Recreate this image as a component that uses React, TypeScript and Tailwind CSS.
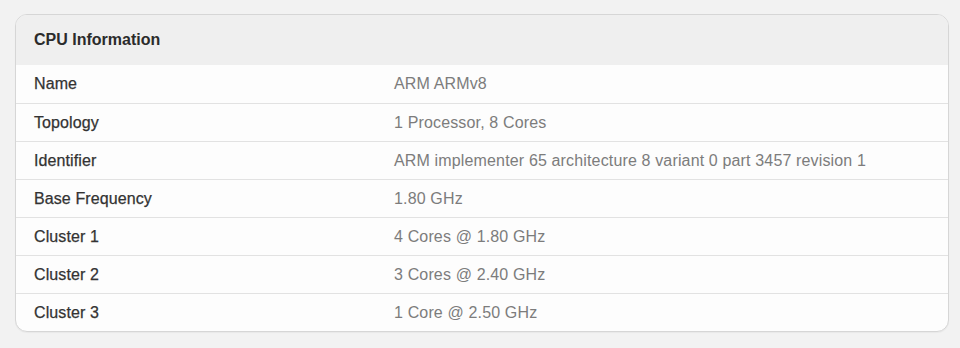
const rows = [
  ["Name", "ARM ARMv8"],
  ["Topology", "1 Processor, 8 Cores"],
  ["Identifier", "ARM implementer 65 architecture 8 variant 0 part 3457 revision 1"],
  ["Base Frequency", "1.80 GHz"],
  ["Cluster 1", "4 Cores @ 1.80 GHz"],
  ["Cluster 2", "3 Cores @ 2.40 GHz"],
  ["Cluster 3", "1 Core @ 2.50 GHz"],
];

export default function App() {
  return (
    <main className="w-full min-h-[348px] bg-[#f2f2f2] pt-[14px] px-[13px] font-['Liberation_Sans',Arial,sans-serif]">
      <div className="w-[934px] ml-[2px] border border-[#d6d6d6] rounded-[12px] overflow-hidden bg-[#fdfdfd] shadow-[0_1px_1px_rgba(0,0,0,0.04)]">
        <div className="h-[50px] bg-[#efefef] flex items-center px-[18px] text-[16px] font-bold text-[#2b2b2b]">
          CPU Information
        </div>
        {rows.map(([label, value], i) => (
          <div
            key={label}
            className={
              "h-[38px] flex items-center px-[18px] text-[16px] " +
              (i > 0 ? "border-t border-[#e2e2e2]" : "")
            }
          >
            <p className="w-[360px] text-[#333] tracking-[0.1px] [-webkit-text-stroke:0.25px_#333]">{label}</p>
            <p className="text-[#7c7c7c] tracking-[0.15px]">{value}</p>
          </div>
        ))}
      </div>
    </main>
  );
}
